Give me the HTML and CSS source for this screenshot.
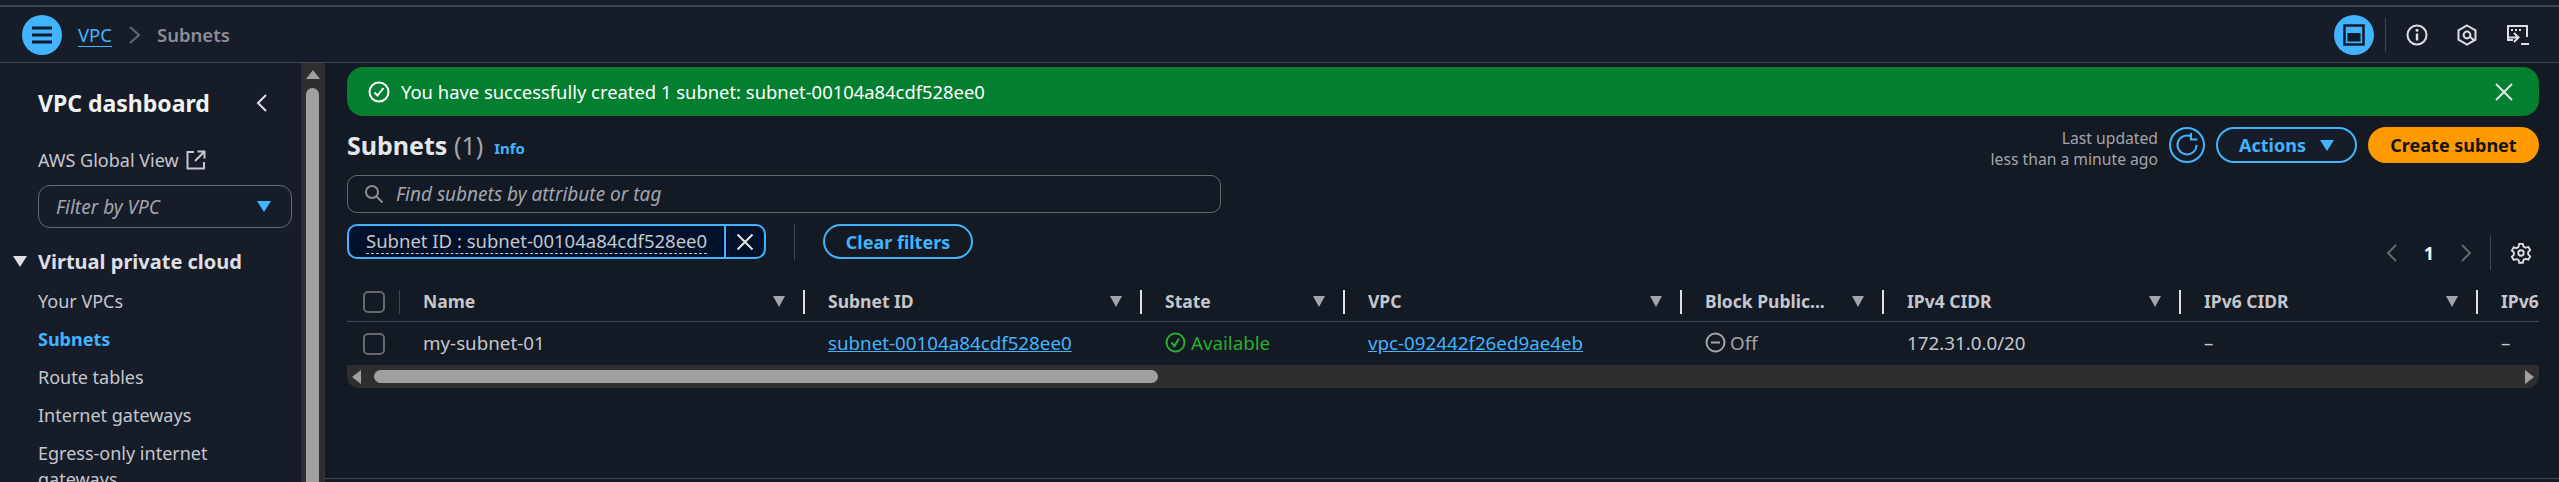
FILE: index.html
```html
<!DOCTYPE html>
<html lang="en">
    <head>
        <meta charset="UTF-8">
        <title>Subnets | VPC Console</title>
        <link rel="stylesheet" href="styles.css">
    </head>
    <body>
        <div class="top-strip"></div>
        <header class="topbar">
            <button class="round-btn">
                <svg width="24" height="20" viewBox="0 0 24 20"><path d="M2 3h20M2 10h20M2 17h20" stroke="#0f1b2a" stroke-width="3"/></svg>
            </button>
            <a class="crumb-link">VPC</a>
            <svg class="crumb-sep" width="12" height="18" viewBox="0 0 12 18"><path d="M1 1l9 8-9 8" fill="none" stroke="#656871" stroke-width="2"/></svg>
            <span class="crumb-now">Subnets</span>
            <div class="top-icons">
                <button class="round-btn">
                    <svg width="22" height="22" viewBox="0 0 22 22"><rect x="1.5" y="1.5" width="19" height="19" fill="none" stroke="#0f1b2a" stroke-width="2.5"/><rect x="4.5" y="9" width="13" height="8.5" fill="#0f1b2a"/></svg>
                </button>
                <span class="top-divider"></span>
                <svg class="top-icon" width="22" height="22" viewBox="0 0 22 22"><circle cx="11" cy="11" r="9.5" fill="none" stroke="#dedee3" stroke-width="2"/><path d="M11 9.5v7" stroke="#dedee3" stroke-width="2.4"/><circle cx="11" cy="6.2" r="1.5" fill="#dedee3"/></svg>
                <svg class="top-icon" width="22" height="22" viewBox="0 0 22 22"><path d="M11 1.5l8.5 4.8v9.4L11 20.5l-8.5-4.8V6.3z" fill="none" stroke="#dedee3" stroke-width="2"/><circle cx="11" cy="11" r="3.4" fill="none" stroke="#dedee3" stroke-width="2"/><path d="M13.5 12.5l5 4" stroke="#dedee3" stroke-width="2"/></svg>
                <svg class="top-icon" width="24" height="22" viewBox="0 0 24 22"><path d="M7 16H2V2h19v11" fill="none" stroke="#dedee3" stroke-width="2"/><path d="M5 6h2M9 6h2M13 6h2" stroke="#dedee3" stroke-width="2"/><path d="M8 9l4.500 4.500L8 18M3 13.500h9" fill="none" stroke="#dedee3" stroke-width="2"/><path d="M15 20h8" stroke="#dedee3" stroke-width="2"/></svg>
            </div>
        </header>

        <div class="layout">
            <nav class="sidebar">
                <div class="side-title">
                    <span>VPC dashboard</span>
                    <svg width="12" height="20" viewBox="0 0 12 20"><path d="M10 2l-8 8 8 8" fill="none" stroke="#dedee3" stroke-width="2"/></svg>
                </div>
                <a class="side-link global">AWS Global View
                    <svg width="20" height="20" viewBox="0 0 20 20"><path d="M8 2H1.500v16.500H18V12" fill="none" stroke="#c6c6cd" stroke-width="2"/><path d="M11.500 1.500H18.500V8.500M18 2l-9 9" fill="none" stroke="#c6c6cd" stroke-width="2"/></svg>
                </a>
                <div class="side-select">
                    <span>Filter by VPC</span>
                    <span class="caret"></span>
                </div>
                <div class="side-group"><span class="group-arrow"></span>Virtual private cloud</div>
                <a class="side-link">Your VPCs</a>
                <a class="side-link active">Subnets</a>
                <a class="side-link">Route tables</a>
                <a class="side-link">Internet gateways</a>
                <a class="side-link">Egress-only internet gateways</a>
            </nav>
            <div class="side-scroll">
                <span class="arrow-up"></span>
                <span class="side-thumb"></span>
            </div>

            <main class="content">
                <div class="flash">
                    <svg width="22" height="22" viewBox="0 0 22 22"><circle cx="11" cy="11" r="9.500" fill="none" stroke="#fff" stroke-width="2"/><path d="M6.500 11.500l3 3 6-7.500" fill="none" stroke="#fff" stroke-width="2"/></svg>
                    <span class="flash-text">You have successfully created 1 subnet: subnet-00104a84cdf528ee0</span>
                    <svg width="18" height="18" viewBox="0 0 18 18"><path d="M1 1l16 16M17 1L1 17" stroke="#e6e6ea" stroke-width="2"/></svg>
                </div>

                <div class="head-row">
                    <h1>Subnets <span class="count">(1)</span></h1>
                    <a class="info">Info</a>
                    <div class="head-actions">
                        <div class="updated">Last updated<br>less than a minute ago</div>
                        <button class="btn icon-btn">
                            <svg width="26" height="26" viewBox="0 0 26 26"><path d="M22.500 13A9.500 9.500 0 1 1 17.500 4.600" fill="none" stroke="#42b4ff" stroke-width="2"/><path d="M17 1v6.500h6.500" fill="none" stroke="#42b4ff" stroke-width="2"/></svg>
                        </button>
                        <button class="btn actions">Actions <span class="caret"></span></button>
                        <button class="btn primary">Create subnet</button>
                    </div>
                </div>

                <div class="search">
                    <svg width="20" height="20" viewBox="0 0 20 20"><circle cx="8" cy="8" r="6" fill="none" stroke="#8c8c94" stroke-width="2"/><path d="M12.500 12.500l6 6" stroke="#8c8c94" stroke-width="2"/></svg>
                    <span>Find subnets by attribute or tag</span>
                </div>

                <div class="filter-row">
                    <div class="token">
                        <span class="token-label"><span class="token-text">Subnet ID : subnet-00104a84cdf528ee0</span></span>
                        <span class="token-close"><svg width="18" height="18" viewBox="0 0 18 18"><path d="M1.500 1.500l15 15M16.500 1.500l-15 15" stroke="#e6e6ea" stroke-width="2"/></svg></span>
                    </div>
                    <span class="filter-divider"></span>
                    <button class="btn clear">Clear filters</button>
                    <div class="pager">
                        <svg width="12" height="20" viewBox="0 0 12 20"><path d="M10 2l-8 8 8 8" fill="none" stroke="#656871" stroke-width="2"/></svg>
                        <b>1</b>
                        <svg width="12" height="20" viewBox="0 0 12 20"><path d="M2 2l8 8-8 8" fill="none" stroke="#656871" stroke-width="2"/></svg>
                        <span class="pager-divider"></span>
                        <svg width="22" height="22" viewBox="0 0 24 24"><path d="M10 2h4l.7 3 2.300 1.300 3-.9 2 3.500-2.200 2.100v2.600l2.200 2.100-2 3.500-3-.9-2.300 1.300-.7 3h-4l-.7-3L7 18.700l-3 .9-2-3.500 2.200-2.100v-2.600L2 9.300l2-3.500 3 .9 2.300-1.300z" fill="none" stroke="#dedee3" stroke-width="2"/><circle cx="12" cy="12" r="3" fill="none" stroke="#dedee3" stroke-width="2"/></svg>
                    </div>
                </div>

                <div class="table">
                    <div class="grid-row table-head">
                        <div class="check-cell"><span class="check"></span></div>
                        <div class="th">Name<span class="sort"></span></div>
                        <div class="th">Subnet ID<span class="sort"></span></div>
                        <div class="th">State<span class="sort"></span></div>
                        <div class="th">VPC<span class="sort"></span></div>
                        <div class="th">Block Public...<span class="sort"></span></div>
                        <div class="th">IPv4 CIDR<span class="sort"></span></div>
                        <div class="th">IPv6 CIDR<span class="sort"></span></div>
                        <div class="th last">IPv6</div>
                    </div>
                    <div class="grid-row table-body">
                        <div class="check-cell"><span class="check"></span></div>
                        <div class="td">my-subnet-01</div>
                        <div class="td"><a class="link">subnet-00104a84cdf528ee0</a></div>
                        <div class="td ok">
                            <svg width="21" height="21" viewBox="0 0 21 21"><circle cx="10.500" cy="10.500" r="9" fill="none" stroke="#29ad32" stroke-width="2"/><path d="M6.500 10.500l3 3.500 4.500-7.500" fill="none" stroke="#29ad32" stroke-width="2"/></svg>
                            Available
                        </div>
                        <div class="td"><a class="link">vpc-092442f26ed9ae4eb</a></div>
                        <div class="td off">
                            <svg width="21" height="21" viewBox="0 0 21 21"><circle cx="10.500" cy="10.500" r="9" fill="none" stroke="#a4a4ad" stroke-width="2"/><path d="M6 10.500h9" stroke="#a4a4ad" stroke-width="2"/></svg>
                            Off
                        </div>
                        <div class="td">172.31.0.0/20</div>
                        <div class="td">–</div>
                        <div class="td last">–</div>
                    </div>
                    <div class="table-scroll">
                        <span class="arrow-left"></span>
                        <div class="table-track"><span class="table-thumb"></span></div>
                        <span class="arrow-right"></span>
                    </div>
                </div>
                <div class="foot-line"></div>
            </main>
        </div>
    </body>
</html>
```

FILE: styles.css
```css
* {
    box-sizing: border-box;
}

html, body {
    height: 100%;
}

body {
    margin: 0;
    overflow: hidden;
    background-color: #131a23;
    color: #c6c6cd;
    font-family: "Noto Sans", sans-serif;
    font-size: 18.5px;
    display: flex;
    flex-direction: column;
}

button {
    font-family: inherit;
    cursor: pointer;
}

a {
    cursor: pointer;
}

.top-strip {
    height: 7px;
    flex: none;
    background-color: #161d29;
    border-bottom: 2px solid #414750;
}

.topbar {
    height: 56px;
    flex: none;
    display: flex;
    align-items: center;
    padding: 0 29px 0 22px;
    background-color: #161d29;
    border-bottom: 1px solid #414750;
}

.round-btn {
    width: 40px;
    height: 40px;
    padding: 0;
    border: none;
    border-radius: 50%;
    background-color: #42b4ff;
    display: flex;
    align-items: center;
    justify-content: center;
}

.crumb-link {
    margin-left: 16px;
    color: #42b4ff;
    border-bottom: 1px solid #42b4ff;
    line-height: 23px;
}

.crumb-sep {
    margin: 0 16px 0 17px;
}

.crumb-now {
    color: #8c8c94;
    font-weight: 600;
}

.top-icons {
    margin-left: auto;
    display: flex;
    align-items: center;
}

.top-divider {
    width: 1px;
    height: 34px;
    margin: 0 20px 0 11px;
    background-color: #414750;
}

.top-icon {
    margin-right: 28px;
}

.top-icon:last-child {
    margin-right: 0;
}

.layout {
    flex: 1;
    min-height: 0;
    display: flex;
}

.sidebar {
    width: 301px;
    flex: none;
    overflow: hidden;
    padding: 25px 9px 0 38px;
    background-color: #161d29;
}

.side-title {
    display: flex;
    align-items: center;
    justify-content: space-between;
    padding-right: 24px;
    height: 30px;
    color: #f2f3f3;
    font-size: 23px;
    font-weight: 700;
}

.side-link {
    display: block;
    max-width: 230px;
    font-size: 18px;
    line-height: 26px;
    margin-bottom: 12px;
    color: #c6c6cd;
}

.side-link.active {
    color: #42b4ff;
    font-weight: 700;
}

.global {
    margin: 29px 0 12px;
    display: flex;
    align-items: center;
    gap: 7px;
}

.side-select {
    height: 43px;
    padding: 0 20px 0 17px;
    border: 1px solid #656871;
    border-radius: 12px;
    display: flex;
    align-items: center;
    justify-content: space-between;
    font-size: 19px;
    font-style: italic;
    color: #a4a4ad;
}

.caret {
    display: inline-block;
    width: 0;
    height: 0;
    border-left: 7px solid transparent;
    border-right: 7px solid transparent;
    border-top: 11px solid #42b4ff;
}

.side-group {
    position: relative;
    margin: 20px 0 12px;
    line-height: 28px;
    font-size: 20px;
    font-weight: 700;
    color: #dedee3;
}

.group-arrow {
    position: absolute;
    left: -25px;
    top: 8px;
    border-left: 7px solid transparent;
    border-right: 7px solid transparent;
    border-top: 11px solid #dedee3;
}

.side-scroll {
    width: 24px;
    flex: none;
    padding: 7px 5px 0;
    background-color: #2e2e2e;
    border-right: 1px solid #2f3542;
    display: flex;
    flex-direction: column;
    align-items: center;
}

.arrow-up {
    border-left: 7px solid transparent;
    border-right: 7px solid transparent;
    border-bottom: 9px solid #a0a0a0;
}

.side-thumb {
    width: 13px;
    flex: 1;
    margin-top: 9px;
    border-radius: 7px 7px 0 0;
    background-color: #a0a0a0;
}

.content {
    flex: 1;
    min-width: 0;
    padding: 4px 20px 0 22px;
    display: flex;
    flex-direction: column;
    background-color: #131a23;
}

.flash {
    height: 49px;
    flex: none;
    padding: 0 26px 0 21px;
    border-radius: 16px;
    background-color: #037f2f;
    color: #fff;
    display: flex;
    align-items: center;
}

.flash-text {
    margin-left: 11px;
    margin-right: auto;
    font-size: 18.4px;
}

.head-row {
    height: 36px;
    margin-top: 11px;
    flex: none;
    display: flex;
    align-items: center;
}

h1 {
    margin: 0;
    color: #e6e6ea;
    font-size: 25px;
    font-weight: 700;
}

.count {
    color: #a4a4ad;
    font-weight: 400;
}

.info {
    margin: 6px 0 0 11px;
    color: #42b4ff;
    font-size: 15px;
    font-weight: 700;
}

.head-actions {
    margin-left: auto;
    display: flex;
    align-items: center;
}

.updated {
    margin-right: 11px;
    padding-top: 7px;
    text-align: right;
    font-size: 15.7px;
    line-height: 21px;
    color: #a4a4ad;
}

.btn {
    height: 36px;
    padding: 0;
    border: 2px solid #42b4ff;
    border-radius: 18px;
    background-color: #161d29;
    color: #42b4ff;
    font-size: 18px;
    font-weight: 700;
    display: flex;
    align-items: center;
    justify-content: center;
}

.icon-btn {
    width: 36px;
    background-color: transparent;
}

.actions {
    width: 141px;
    margin-left: 11px;
    gap: 14px;
}

.primary {
    width: 171px;
    margin-left: 11px;
    border: none;
    background-color: #ff9900;
    color: #0f141a;
}

.search {
    width: 874px;
    height: 38px;
    margin-top: 12px;
    flex: none;
    padding: 0 12px 0 16px;
    border: 1px solid #656871;
    border-radius: 10px;
    display: flex;
    align-items: center;
    gap: 12px;
    font-size: 19px;
    font-style: italic;
    color: #a4a4ad;
}

.filter-row {
    height: 66px;
    flex: none;
    margin-top: 11px;
    display: flex;
    align-items: flex-start;
}

.token {
    width: 419px;
    height: 35px;
    display: flex;
    border: 2px solid #42b4ff;
    border-radius: 10px;
    background-color: #001129;
    overflow: hidden;
}

.token-label {
    flex: 1;
    padding-left: 17px;
    white-space: nowrap;
    line-height: 29px;
    color: #c6c6cd;
}

.token-text {
    border-bottom: 1px dashed #c6c6cd;
}

.token-close {
    width: 40px;
    flex: none;
    border-left: 2px solid #42b4ff;
    display: flex;
    align-items: center;
    justify-content: center;
}

.filter-divider {
    width: 1px;
    height: 36px;
    margin: 0 28px;
    background-color: #414750;
}

.clear {
    width: 150px;
    height: 35px;
    background-color: transparent;
}

.pager {
    margin-left: auto;
    margin-top: 11px;
    margin-right: 7px;
    display: flex;
    align-items: center;
    color: #f2f3f3;
}

.pager b {
    margin: 0 26px;
    font-size: 18px;
    line-height: 1;
}

.pager-divider {
    width: 1px;
    height: 35px;
    margin: 0 19px 0 18px;
    background-color: #414750;
}

.table {
    flex: none;
}

.grid-row {
    display: grid;
    grid-template-columns: 53px 405px 337px 203px 337px 202px 297px 297px 61px;
    border-bottom: 1px solid #414750;
}

.table-head {
    height: 32px;
    align-items: start;
}

.table-body {
    height: 43px;
    align-items: center;
    border-bottom: none;
}

.check-cell {
    padding-left: 16px;
    display: flex;
    height: 24px;
    align-items: center;
    border-right: 1px solid #414750;
}

.table-body .check-cell {
    border-right: none;
}

.check {
    width: 22px;
    height: 22px;
    border: 2px solid #656871;
    border-radius: 5px;
}

.th {
    height: 24px;
    padding: 0 18px 2px 23px;
    display: flex;
    align-items: center;
    justify-content: space-between;
    border-right: 2px solid #dedee3;
    font-size: 17.5px;
    font-weight: 700;
    white-space: nowrap;
    color: #c6c6cd;
}

.th.last {
    border-right: none;
    padding-right: 0;
}

.sort {
    width: 0;
    height: 0;
    border-left: 6px solid transparent;
    border-right: 6px solid transparent;
    border-top: 11px solid #a4a4ad;
}

.td {
    padding: 0 0 2px 23px;
    display: flex;
    align-items: center;
    white-space: nowrap;
    font-size: 18.75px;
}

.link {
    color: #42b4ff;
    text-decoration: underline;
}

.ok {
    color: #29ad32;
    gap: 5px;
}

.off {
    color: #a4a4ad;
    gap: 4px;
}

.table-scroll {
    height: 23px;
    display: flex;
    align-items: center;
    padding: 0 5px;
    border-radius: 0 0 12px 12px;
    background-color: #2e2e2e;
}

.arrow-left {
    border-top: 7px solid transparent;
    border-bottom: 7px solid transparent;
    border-right: 9px solid #a0a0a0;
}

.arrow-right {
    border-top: 7px solid transparent;
    border-bottom: 7px solid transparent;
    border-left: 9px solid #a0a0a0;
}

.table-track {
    flex: 1;
    padding: 0 8px 0 13px;
}

.table-thumb {
    display: block;
    width: 784px;
    height: 13px;
    border-radius: 7px;
    background-color: #a0a0a0;
}

.foot-line {
    margin: auto -20px 3px -22px;
    height: 1px;
    background-color: #414750;
}
```
